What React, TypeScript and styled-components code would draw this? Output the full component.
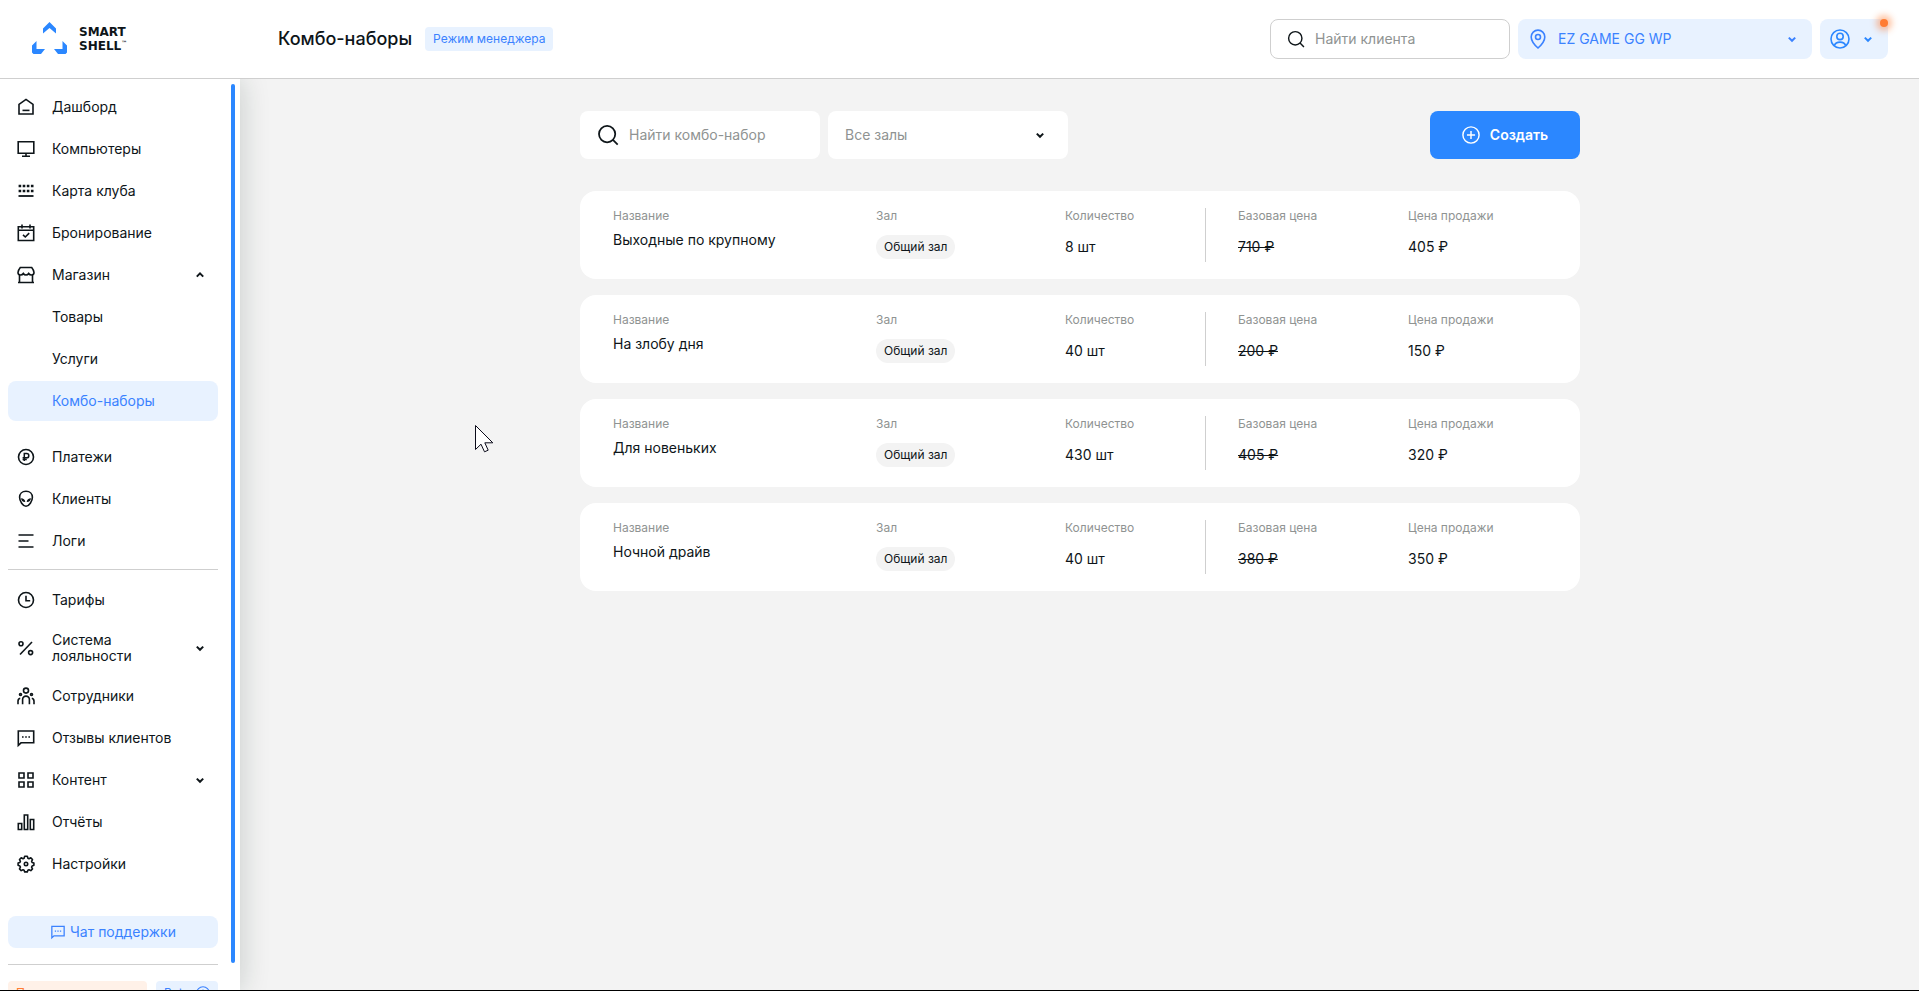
import React, { type ReactNode } from "react";
import styled, { createGlobalStyle, css } from "styled-components";

const color = {
  ink: "#0e1519",
  muted: "#8f9392",
  line: "#cfcfcf",
  blue: "#2b87ff",
  blueText: "#3b82ff",
  blueSoft: "#e8f2ff",
  page: "#f3f3f3",
};

const GlobalStyle = createGlobalStyle`
  *, *::before, *::after { box-sizing: border-box; }
  body {
    margin: 0;
    background: ${color.page};
    color: ${color.ink};
    font: 400 14px/16px Inter, "Noto Sans", sans-serif;
  }
  button, input, select { font: inherit; color: inherit; margin: 0; }
  button { cursor: pointer; border: 0; }
  a { color: inherit; text-decoration: none; }
  h1, dl, dd, ul { margin: 0; padding: 0; }
  ul { list-style: none; }
`;

const Page = styled.div`
  display: grid;
  grid-template-rows: auto minmax(0, 1fr);
  height: 100vh;
  border-bottom: 1px solid #000;
  overflow: hidden;
`;

/* ---------- icons ---------- */

const Svg = styled.svg<{ $size?: number }>`
  flex: none;
  display: block;
  width: ${(p) => p.$size ?? 20}px;
  height: ${(p) => p.$size ?? 20}px;
  fill: none;
  stroke: currentColor;
  stroke-width: 1.6;
`;

const Dots = ({ y }: { y: number }) => (
  <path d={`M2.600 ${y}h2.600M6.700 ${y}h2.600M10.800 ${y}h2.600M14.900 ${y}h2.600`} strokeWidth="2.4" />
);

const icons: Record<string, ReactNode> = {
  dashboard: (
    <>
      <path d="M3 17V7.400L10 2.400l7 5V17z" />
      <path d="M6.500 13.400h7" />
    </>
  ),
  computer: (
    <>
      <path d="M2.200 2.800h15.600v11.400H2.200z" />
      <path d="M10 14v3.200M6 17.300h8" />
    </>
  ),
  map: (
    <>
      <Dots y={5} />
      <Dots y={10} />
      <path d="M2.500 15h15" strokeWidth="1.800" />
    </>
  ),
  booking: (
    <>
      <path d="M2.300 3.800h15.400v13.700H2.300zM2.300 7.300h15.400M6 1.500v4M14 1.500v4" />
      <path d="M7 11.800l2.300 2.200 3.900-3.900" />
    </>
  ),
  shop: (
    <>
      <path d="M3.500 10v7.500h13V10M2 17.500h16" />
      <path d="M4.300 2.500h11.400c1.200 1.500 2.300 3.100 2.300 5 0 1.500-1 2.500-2.600 2.500-1.300 0-2.200-.7-2.700-1.500-.5.800-1.400 1.500-2.700 1.500s-2.200-.7-2.700-1.500C6.800 9.300 5.900 10 4.600 10 3 10 2 9 2 7.500c0-1.900 1.100-3.500 2.300-5z" />
    </>
  ),
  payments: (
    <>
      <circle cx="10" cy="10" r="7.500" />
      <path d="M8.300 14V6.600h2.400a2 2 0 0 1 0 4.200H6.600M6.600 12.600h4.200" strokeWidth="1.500" />
    </>
  ),
  clients: (
    <>
      <path d="M10 2.300c4 0 6.400 2.600 6.400 6 0 3.900-3.300 9-6.400 9s-6.400-5.100-6.400-9c0-3.400 2.400-6 6.400-6z" />
      <path
        d="M5 9.300c2.400 0 4 1.200 4.300 3.600C6.800 13 5.200 11.800 5 9.300zM15 9.300c-2.400 0-4 1.200-4.300 3.600 2.500.1 4.100-1.100 4.300-3.600z"
        fill="currentColor"
        stroke="none"
      />
    </>
  ),
  logs: <path d="M2.500 4h15M2.500 10h10M2.500 16h15" />,
  tariffs: (
    <>
      <circle cx="10" cy="10" r="7.500" />
      <path d="M10 5.800v5h4.200" />
    </>
  ),
  percent: (
    <>
      <path d="M16 4L4 16.500" />
      <circle cx="5" cy="5.800" r="2" />
      <circle cx="14.600" cy="14.600" r="2" />
    </>
  ),
  staff: (
    <>
      <circle cx="10" cy="4.600" r="2.500" />
      <path d="M6.600 18.300v-4.800a3.400 3.400 0 0 1 6.800 0v4.800" />
      <path d="M2 18.300v-3c0-1.700.7-2.700 2.200-3M18 18.300v-3c0-1.700-.7-2.700-2.200-3" />
      <circle cx="4.500" cy="8.500" r="1" />
      <circle cx="15.500" cy="8.500" r="1" />
    </>
  ),
  chat: (
    <>
      <path d="M2.300 17.300V3h15.400v11.800H5z" />
      <path d="M6 9h1.600M9.200 9h1.600M12.400 9h1.600" />
    </>
  ),
  content: <path d="M3 3h5v5H3zM12 3h5v5h-5zM3 12h5v5H3zM12 12h5v5h-5z" />,
  reports: <path d="M2.300 11.500h3.400v6H2.300zM8.300 3h3.400v14.500H8.300zM14.300 7.500h3.400v10h-3.400z" />,
  settings: (
    <>
      <path
        strokeLinejoin="round"
        d="M8.700 2.300h2.600l.6 1.900 1.100.5 1.800-.9 1.700 1.800-.9 1.700.5 1.200 1.800.5v2.300l-1.800.7-.5 1.100.9 1.800-1.700 1.700-1.800-.9-1.100.5-.6 1.700H8.700l-.6-1.700-1.100-.5-1.800.9-1.700-1.700.9-1.800-.5-1.100-1.800-.7V9l1.800-.5.500-1.200-.9-1.700 1.700-1.800 1.800.9 1.100-.5z"
      />
      <circle cx="10" cy="10" r="1.700" />
    </>
  ),
  search: (
    <>
      <circle cx="9.200" cy="9.200" r="7.400" />
      <path d="M14.500 14.500l4.300 4.300" />
    </>
  ),
  pin: (
    <>
      <path d="M10 19C5.800 15.200 3.200 11.700 3.200 7.900a6.800 6.800 0 0 1 13.600 0c0 3.800-2.600 7.300-6.800 11.100z" />
      <circle cx="10" cy="8" r="2.500" />
    </>
  ),
  user: (
    <>
      <circle cx="10" cy="10" r="9" />
      <circle cx="10" cy="7.400" r="3.200" />
      <path d="M4.300 16.600c.8-2.300 3-3.500 5.700-3.500s4.900 1.200 5.700 3.500" />
    </>
  ),
  plus: (
    <>
      <circle cx="10" cy="10" r="9" />
      <path d="M10 5.500v9M5.500 10h9" />
    </>
  ),
  info: (
    <>
      <circle cx="10" cy="10" r="9" />
      <path d="M10 9v6M10 5v2" />
    </>
  ),
  down: <path d="M6.800 8.600l3.200 3.200 3.200-3.200" strokeWidth="2" />,
  up: <path d="M6.800 11.600l3.200-3.200 3.200 3.200" strokeWidth="2" />,
};

const Icon = ({ name, size }: { name: string; size?: number }) => (
  <Svg $size={size} viewBox="0 0 20 20" aria-hidden="true">
    {icons[name]}
  </Svg>
);

/* ---------- header ---------- */

const Header = styled.header`
  position: relative;
  z-index: 2;
  display: flex;
  align-items: center;
  height: 79px;
  padding: 0 31px 0 32px;
  background: #fff;
  border-bottom: 1px solid ${color.line};
`;

const Brand = styled.a`
  display: flex;
  align-items: center;
  gap: 12px;
  width: 246px;
  font: 700 12px/14px "DejaVu Sans", Inter, sans-serif;
`;

const LogoMark = styled.svg`
  width: 35px;
  height: 32px;
  margin-bottom: 2px;
  fill: ${color.blue};
`;

const BrandName = styled.span`
  display: flex;
  flex-direction: column;
`;

const BrandLine = styled.span`
  display: flex;
`;

const Trademark = styled.span`
  font-size: 6px;
  line-height: 8px;
`;

const Title = styled.h1`
  font-size: 18px;
  line-height: 24px;
  font-weight: 500;
`;

const ModeTag = styled.span`
  margin: 0 auto 0 13px;
  padding: 4px 8px;
  border-radius: 4px;
  background: ${color.blueSoft};
  color: ${color.blueText};
  font-size: 12px;
`;

const HeaderTools = styled.div`
  display: flex;
  gap: 8px;
`;

const Field = styled.label<{ $kind: "outlined" | "soft" | "plain"; $width: number }>`
  display: flex;
  align-items: center;
  gap: 10px;
  width: ${(p) => p.$width}px;
  height: 40px;
  padding: 0 10px;
  border-radius: 8px;
  ${(p) =>
    p.$kind === "outlined" &&
    css`
      padding: 0 16px;
      background: #fff;
      border: 1px solid ${color.line};
    `}
  ${(p) =>
    p.$kind === "soft" &&
    css`
      background: ${color.blueSoft};
      color: ${color.blueText};
    `}
  ${(p) =>
    p.$kind === "plain" &&
    css`
      height: 48px;
      padding: 0 18px 0 17px;
      background: #fff;
    `}
`;

const TextInput = styled.input`
  flex: 1;
  min-width: 0;
  padding: 0;
  border: 0;
  outline: 0;
  background: transparent;
  &::placeholder {
    color: ${color.muted};
    opacity: 1;
  }
`;

const Select = styled.select<{ $muted?: boolean }>`
  flex: 1;
  min-width: 0;
  padding: 0;
  border: 0;
  outline: 0;
  appearance: none;
  background: transparent;
  ${(p) => p.$muted && `color: ${color.muted};`}
`;

const ProfileButton = styled.button`
  position: relative;
  display: flex;
  align-items: center;
  gap: 8px;
  width: 68px;
  height: 40px;
  padding: 0 10px;
  border-radius: 8px;
  background: ${color.blueSoft};
  color: ${color.blue};
`;

const NoticeDot = styled.span`
  position: absolute;
  top: 0;
  right: 0;
  width: 8px;
  height: 8px;
  border-radius: 50%;
  background: #ff7c33;
  box-shadow: 0 0 6px 4px rgba(255, 124, 51, 0.45);
`;

/* ---------- sidebar ---------- */

const Body = styled.div`
  display: grid;
  grid-template-columns: 240px minmax(0, 1fr);
  min-height: 0;
`;

const Sidebar = styled.aside`
  position: relative;
  z-index: 1;
  display: flex;
  justify-content: space-between;
  min-height: 0;
  padding: 0 5px 0 8px;
  background: #fff;
  box-shadow: 0 0 28px rgba(14, 40, 28, 0.2);
`;

const SidebarScroll = styled.div`
  width: 210px;
  overflow: hidden;
  padding-top: 8px;
`;

const ScrollThumb = styled.div`
  width: 4px;
  margin: 5px 0 27px;
  border-radius: 2px;
  background: ${color.blue};
`;

const NavList = styled.ul`
  display: flex;
  flex-direction: column;
  gap: 2px;
`;

const NavGroup = styled.li<{ $spaced?: boolean }>`
  margin-bottom: ${(p) => (p.$spaced ? 14 : 0)}px;
`;

const NavLink = styled.a<{ $active?: boolean; $tall?: boolean }>`
  display: grid;
  grid-template-columns: 20px 1fr 20px;
  column-gap: 16px;
  align-items: center;
  height: ${(p) => (p.$tall ? 52 : 40)}px;
  padding: 0 8px;
  border-radius: 8px;
  ${(p) =>
    p.$active &&
    css`
      background: ${color.blueSoft};
      color: ${color.blueText};
    `}
`;

const NavLabel = styled.span`
  grid-column: 2;
  white-space: pre-line;
`;

const Rule = styled.hr`
  height: 1px;
  margin: 8px 0 10px;
  border: 0;
  background: ${color.line};
`;

const SupportButton = styled.button`
  display: flex;
  align-items: center;
  justify-content: center;
  gap: 4px;
  width: 100%;
  height: 32px;
  margin: 32px 0 16px;
  border-radius: 8px;
  background: ${color.blueSoft};
  color: ${color.blueText};
`;

const FooterRule = styled(Rule)`
  margin: 0 0 16px;
`;

const FooterTags = styled.div`
  display: flex;
  gap: 9px;
`;

const FooterTag = styled.a<{ $warm?: boolean }>`
  display: flex;
  align-items: center;
  justify-content: space-between;
  flex: ${(p) => (p.$warm ? "1" : "0 0 62px")};
  height: 24px;
  padding: 0 8px;
  border-radius: 4px;
  font-size: 12px;
  background: ${(p) => (p.$warm ? "#fff1e8" : color.blueSoft)};
  color: ${(p) => (p.$warm ? "#ff7c33" : color.blueText)};
`;

/* ---------- content ---------- */

const Main = styled.main`
  min-width: 0;
  overflow: auto;
  padding: 32px 0 32px 1px;
`;

const Content = styled.div`
  max-width: 1000px;
  margin: 0 auto;
`;

const Toolbar = styled.div`
  display: flex;
  gap: 8px;
  margin-bottom: 32px;
`;

const CreateButton = styled.button`
  display: flex;
  align-items: center;
  justify-content: center;
  gap: 10px;
  width: 150px;
  height: 48px;
  margin-left: auto;
  border-radius: 8px;
  background: ${color.blue};
  color: #fff;
  font-weight: 600;
`;

const CardList = styled.ul`
  display: grid;
  gap: 16px;
`;

const Card = styled.li`
  padding: 17px 32px 17px 33px;
  border-radius: 16px;
  background: #fff;
`;

const Facts = styled.dl`
  display: grid;
  grid-template-columns: 263fr 189fr 140fr 203fr 140fr;
`;

const Fact = styled.div<{ $divided?: boolean }>`
  min-width: 0;
  height: 54px;
  ${(p) =>
    p.$divided &&
    css`
      padding-left: 32px;
      border-left: 1px solid ${color.line};
    `}
`;

const FactName = styled.dt`
  color: ${color.muted};
  font-size: 12px;
`;

const FactValue = styled.dd<{ $heading?: boolean; $struck?: boolean }>`
  margin-top: ${(p) => (p.$heading ? 8 : 11)}px;
  line-height: ${(p) => (p.$heading ? 16 : 24)}px;
  text-decoration: ${(p) => (p.$struck ? "line-through" : "none")};
`;

const HallChip = styled.span`
  display: inline-block;
  vertical-align: top;
  padding: 0 8px;
  border-radius: 12px;
  background: ${color.page};
  font-size: 12px;
`;

const Pointer = styled.svg`
  position: fixed;
  z-index: 3;
  left: 475px;
  top: 425px;
  width: 19px;
  height: 28px;
  pointer-events: none;
`;

/* ---------- data ---------- */

type NavItem = { label: string; icon?: string; arrow?: "up" | "down"; active?: boolean; tall?: boolean; spaced?: boolean };

const primaryNav: NavItem[] = [
  { label: "Дашборд", icon: "dashboard" },
  { label: "Компьютеры", icon: "computer" },
  { label: "Карта клуба", icon: "map" },
  { label: "Бронирование", icon: "booking" },
  { label: "Магазин", icon: "shop", arrow: "up" },
  { label: "Товары" },
  { label: "Услуги" },
  { label: "Комбо-наборы", active: true, spaced: true },
  { label: "Платежи", icon: "payments" },
  { label: "Клиенты", icon: "clients" },
  { label: "Логи", icon: "logs" },
];

const secondaryNav: NavItem[] = [
  { label: "Тарифы", icon: "tariffs" },
  { label: "Система\nлояльности", icon: "percent", arrow: "down", tall: true },
  { label: "Сотрудники", icon: "staff" },
  { label: "Отзывы клиентов", icon: "chat" },
  { label: "Контент", icon: "content", arrow: "down" },
  { label: "Отчёты", icon: "reports" },
  { label: "Настройки", icon: "settings" },
];

const combos = [
  { name: "Выходные по крупному", count: "8 шт", base: "710 ₽", sale: "405 ₽" },
  { name: "На злобу дня", count: "40 шт", base: "200 ₽", sale: "150 ₽" },
  { name: "Для новеньких", count: "430 шт", base: "405 ₽", sale: "320 ₽" },
  { name: "Ночной драйв", count: "40 шт", base: "380 ₽", sale: "350 ₽" },
];

const Nav = ({ items }: { items: NavItem[] }) => (
  <NavList>
    {items.map((item) => (
      <NavGroup key={item.label} $spaced={item.spaced}>
        <NavLink href="#" $active={item.active} $tall={item.tall} aria-current={item.active ? "page" : undefined}>
          {item.icon && <Icon name={item.icon} />}
          <NavLabel>{item.label}</NavLabel>
          {item.arrow && <Icon name={item.arrow} />}
        </NavLink>
      </NavGroup>
    ))}
  </NavList>
);

export default function App() {
  return (
    <>
      <GlobalStyle />
      <Page>
        <Header>
          <Brand href="#">
            <LogoMark viewBox="0 0 35 32" aria-hidden="true">
              <path d="M17.500 0L24 6.500v5L17.500 6 11 11.500v-5z" />
              <path d="M0 23.500L4.500 19v8h8.500L9 32H1.500L0 30.500z" />
              <path d="M35 23.500L30.500 19v8H22l4 5h7.500l1.500-1.500z" />
            </LogoMark>
            <BrandName>
              <BrandLine>SMART</BrandLine>
              <BrandLine>
                SHELL<Trademark>™</Trademark>
              </BrandLine>
            </BrandName>
          </Brand>
          <Title>Комбо-наборы</Title>
          <ModeTag>Режим менеджера</ModeTag>
          <HeaderTools>
            <Field $kind="outlined" $width={240}>
              <Icon name="search" size={18} />
              <TextInput type="text" placeholder="Найти клиента" aria-label="Найти клиента" />
            </Field>
            <Field $kind="soft" $width={294}>
              <Icon name="pin" />
              <Select aria-label="Клуб">
                <option>EZ GAME GG WP</option>
              </Select>
              <Icon name="down" />
            </Field>
            <ProfileButton type="button" aria-label="Профиль">
              <Icon name="user" />
              <Icon name="down" />
              <NoticeDot />
            </ProfileButton>
          </HeaderTools>
        </Header>

        <Body>
          <Sidebar>
            <SidebarScroll>
              <nav>
                <Nav items={primaryNav} />
                <Rule />
                <Nav items={secondaryNav} />
              </nav>
              <SupportButton type="button">
                <Icon name="chat" size={16} />
                Чат поддержки
              </SupportButton>
              <FooterRule />
              <FooterTags>
                <FooterTag href="#" $warm>
                  Подписка
                </FooterTag>
                <FooterTag href="#">
                  Beta
                  <Icon name="info" size={14} />
                </FooterTag>
              </FooterTags>
            </SidebarScroll>
            <ScrollThumb />
          </Sidebar>

          <Main>
            <Content>
              <Toolbar>
                <Field $kind="plain" $width={240}>
                  <Icon name="search" size={22} />
                  <TextInput type="text" placeholder="Найти комбо-набор" aria-label="Найти комбо-набор" />
                </Field>
                <Field $kind="plain" $width={240}>
                  <Select $muted aria-label="Зал">
                    <option>Все залы</option>
                  </Select>
                  <Icon name="down" />
                </Field>
                <CreateButton type="button">
                  <Icon name="plus" size={18} />
                  Создать
                </CreateButton>
              </Toolbar>

              <CardList>
                {combos.map((combo) => (
                  <Card key={combo.name}>
                    <Facts>
                      <Fact>
                        <FactName>Название</FactName>
                        <FactValue $heading>{combo.name}</FactValue>
                      </Fact>
                      <Fact>
                        <FactName>Зал</FactName>
                        <FactValue>
                          <HallChip>Общий зал</HallChip>
                        </FactValue>
                      </Fact>
                      <Fact>
                        <FactName>Количество</FactName>
                        <FactValue>{combo.count}</FactValue>
                      </Fact>
                      <Fact $divided>
                        <FactName>Базовая цена</FactName>
                        <FactValue $struck>{combo.base}</FactValue>
                      </Fact>
                      <Fact>
                        <FactName>Цена продажи</FactName>
                        <FactValue>{combo.sale}</FactValue>
                      </Fact>
                    </Facts>
                  </Card>
                ))}
              </CardList>
            </Content>
          </Main>
        </Body>
      </Page>
      <Pointer viewBox="0 0 19 28" aria-hidden="true">
        <path d="M.5.500v24l5.500-5.300 3.500 7.600 3.700-1.600-3.400-7.400h8z" fill="#fff" stroke="#0b0b1a" />
      </Pointer>
    </>
  );
}
